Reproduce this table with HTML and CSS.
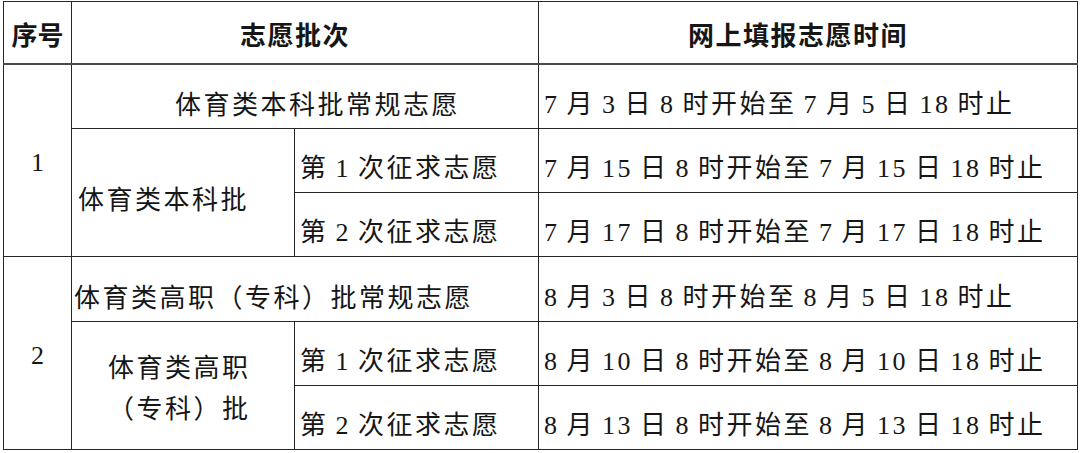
FILE: index.html
```html
<!DOCTYPE html>
<html lang="zh-CN">
<head>
<meta charset="utf-8">
<title>体育类志愿填报时间</title>
<link rel="stylesheet" href="styles.css">
</head>
<body>
<table class="schedule">
  <colgroup>
    <col class="c-no">
    <col class="c-batch">
    <col class="c-round">
    <col class="c-time">
  </colgroup>
  <thead>
    <tr class="r-head">
      <th class="no-h">序号</th>
      <th colspan="2" class="head-shift">志愿批次</th>
      <th class="head-shift">网上填报志愿时间</th>
    </tr>
  </thead>
  <tbody>
    <tr class="r-a">
      <td rowspan="3" class="no">1</td>
      <td colspan="2" class="main main-center">体育类本科批常规志愿</td>
      <td class="time">7 月 3 日 8 时开始至 7 月 5 日 18 时止</td>
    </tr>
    <tr class="r-b">
      <td rowspan="2" class="sub">体育类本科批</td>
      <td class="round">第 1 次征求志愿</td>
      <td class="time">7 月 15 日 8 时开始至 7 月 15 日 18 时止</td>
    </tr>
    <tr class="r-b">
      <td class="round">第 2 次征求志愿</td>
      <td class="time">7 月 17 日 8 时开始至 7 月 17 日 18 时止</td>
    </tr>
    <tr class="r-a">
      <td rowspan="3" class="no">2</td>
      <td colspan="2" class="main main-left">体育类高职（专科）批常规志愿</td>
      <td class="time">8 月 3 日 8 时开始至 8 月 5 日 18 时止</td>
    </tr>
    <tr class="r-b">
      <td rowspan="2" class="sub sub-two">体育类高职<br>（专科）批</td>
      <td class="round">第 1 次征求志愿</td>
      <td class="time">8 月 10 日 8 时开始至 8 月 10 日 18 时止</td>
    </tr>
    <tr class="r-b">
      <td class="round">第 2 次征求志愿</td>
      <td class="time">8 月 13 日 8 时开始至 8 月 13 日 18 时止</td>
    </tr>
  </tbody>
</table>
</body>
</html>
```

FILE: styles.css
```css
html, body {
  margin: 0;
  padding: 0;
  background: #ffffff;
}

body {
  padding: 1px 0 0 3px;
}

.schedule {
  border-collapse: collapse;
  table-layout: fixed;
  width: 1074px;
  color: #161616;
  font-family: "Liberation Serif", "Noto Sans CJK SC", serif;
  font-size: 26px;
  letter-spacing: 2.5px;
  word-spacing: -2px;
}

.c-no { width: 68px; }
.c-batch { width: 223px; }
.c-round { width: 244px; }
.c-time { width: 539px; }

.schedule th,
.schedule td {
  border: 1.5px solid #262626;
  padding: 0;
  vertical-align: middle;
  line-height: 30px;
  white-space: nowrap;
}

.schedule th {
  font-family: "Noto Sans CJK SC", sans-serif;
  font-weight: 700;
  letter-spacing: 1.5px;
  text-align: center;
  padding-top: 3px;
  border-bottom: 2px solid #4a4a4a;
}

.schedule .no-h {
  letter-spacing: 0;
}

.schedule .head-shift {
  padding-right: 20px;
}

.r-head { height: 62px; }
.r-a { height: 65px; }
.r-b { height: 64px; }

.schedule .no {
  text-align: center;
  padding-top: 5px;
  letter-spacing: 0;
}

.schedule .main {
  padding-top: 20px;
}

.schedule .main-center {
  text-align: left;
  padding-left: 103px;
}

.schedule .main-left {
  text-align: left;
  padding-left: 2px;
}

.schedule .sub {
  text-align: left;
  padding-left: 6px;
  padding-top: 16px;
}

.schedule .sub-two {
  padding-left: 36px;
  padding-top: 6px;
  line-height: 41px;
}

.schedule .round {
  text-align: left;
  padding-left: 5px;
  padding-top: 17px;
}

.schedule .time {
  text-align: left;
  padding-left: 5px;
  padding-top: 17px;
}
```
